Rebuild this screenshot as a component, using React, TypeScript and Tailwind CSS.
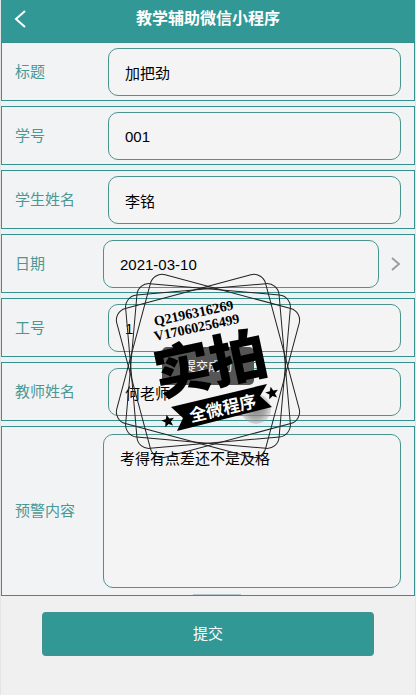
import { useState } from "react";
import type { ReactNode } from "react";

const fieldClass =
  "block min-w-0 flex-1 rounded-[10px] border border-[#4a948e] bg-[#f4f4f5] px-4 text-[15px] leading-6 text-black outline-none";

function Row({ id, label, wide, children }: { id: string; label: string; wide?: boolean; children: ReactNode }) {
  return (
    <div className="flex items-center border border-[#38908c] bg-[#f2f3f4] px-[13px] pt-[5px] pb-1">
      <label htmlFor={id} className={`${wide ? "w-[88px]" : "w-[93px]"} shrink-0 text-[15px] text-[#4a9894]`}>
        {label}
      </label>
      {children}
    </div>
  );
}

function TextRow({ id, label, initial }: { id: string; label: string; initial: string }) {
  const [value, setValue] = useState(initial);
  return (
    <Row id={id} label={label}>
      <input id={id} type="text" value={value} onChange={(e) => setValue(e.target.value)} className={`${fieldClass} h-12`} />
    </Row>
  );
}

const star = "0,-6.5 1.8,-2.2 6.5,-2 2.8,1 4,5.5 0,3 -4,5.5 -2.8,1 -6.5,-2 -1.8,-2.2";

function Stamp() {
  return (
    <svg
      viewBox="0 0 200 200"
      className="pointer-events-none absolute top-[266px] left-1/2 h-[200px] w-[200px] -translate-x-1/2"
      aria-hidden="true"
    >
      <defs>
        <radialGradient id="puck">
          <stop offset="0" stopColor="#777" stopOpacity="0.85" />
          <stop offset="0.6" stopColor="#888" stopOpacity="0.7" />
          <stop offset="1" stopColor="#aaa" stopOpacity="0.4" />
        </radialGradient>
      </defs>
      <circle cx="148" cy="143" r="15" fill="url(#puck)" />
      <g fill="none" stroke="#222" strokeWidth="1">
        <rect x="23" y="23" width="154" height="154" rx="12" transform="rotate(15 100 100)" />
        <rect x="23" y="23" width="154" height="154" rx="12" transform="rotate(5 100 100)" />
        <rect x="23" y="23" width="154" height="154" rx="12" transform="rotate(-5 100 100)" />
        <rect x="23" y="23" width="154" height="154" rx="12" transform="rotate(-15 100 100)" />
      </g>
      <g className="font-['Liberation_Serif',serif] text-[14px] font-bold">
        <text transform="translate(47 60) rotate(-12)">Q2196316269</text>
        <text transform="translate(47 75) rotate(-12)">V17060256499</text>
      </g>
      <text transform="translate(51 130) rotate(-12)" className="font-['Noto_Sans_CJK_SC',sans-serif] text-[57px] font-black">
        实拍
      </text>
      <polygon points="63,141 159,118 152,130 164,141 69,165 75,152" />
      <text
        transform="translate(83 156) rotate(-13)"
        fill="#fff"
        className="font-['Noto_Sans_CJK_SC',sans-serif] text-[17px] font-bold"
      >
        全微程序
      </text>
      <polygon points={star} transform="translate(60 155) rotate(-12)" />
      <polygon points={star} transform="translate(164 127) rotate(-12)" />
    </svg>
  );
}

export default function App() {
  const [note, setNote] = useState("考得有点差还不是及格");
  return (
    <div className="relative min-h-screen border-x border-[#e2e4e6] bg-[#f0f0f0] font-['Liberation_Sans','Noto_Sans_CJK_SC',sans-serif]">
      <header className="grid h-[42px] grid-cols-[40px_1fr_40px] items-center bg-[#319896] pb-1 text-white">
        <button type="button" aria-label="返回" className="flex h-full items-center pl-[13px]">
          <svg viewBox="0 0 12 18" className="h-[18px] w-3" fill="none" stroke="currentColor" strokeWidth="2">
            <path d="M11 1 L2 9 L11 17" />
          </svg>
        </button>
        <h1 className="text-center text-[16px] font-bold">教学辅助微信小程序</h1>
      </header>

      <form onSubmit={(e) => e.preventDefault()}>
        <div className="flex flex-col gap-[5px] bg-[#ebf2f6]">
          <TextRow id="title" label="标题" initial="加把劲" />
          <TextRow id="number" label="学号" initial="001" />
          <TextRow id="student" label="学生姓名" initial="李铭" />
          <Row id="date" label="日期" wide>
            <input id="date" type="text" readOnly value="2021-03-10" className={`${fieldClass} h-12`} />
            <svg viewBox="0 0 22 14" className="h-[14px] w-[22px] shrink-0" fill="none" stroke="#999" strokeWidth="1.8">
              <path d="M13 1 L20 7 L13 13" />
            </svg>
          </Row>
          <TextRow id="staff" label="工号" initial="1" />
          <TextRow id="teacher" label="教师姓名" initial="何老师" />
          <div className="relative flex items-center border border-[#38908c] bg-[#f2f3f4] px-[13px] py-[7px]">
            <label htmlFor="note" className="w-[88px] shrink-0 text-[15px] text-[#4a9894]">
              预警内容
            </label>
            <textarea
              id="note"
              value={note}
              onChange={(e) => setNote(e.target.value)}
              className={`${fieldClass} h-[154px] resize-none pt-3`}
            />
            <span className="absolute bottom-0 left-1/2 ml-[-15px] h-px w-12 bg-[#b5c4c4]" />
          </div>
        </div>
        <div className="px-[41px] pt-4">
          <button
            type="submit"
            className="h-11 w-full rounded-[4px] border-[3px] border-[#3b9491] bg-[#319896] text-[15px] text-white"
          >
            提交
          </button>
        </div>
      </form>

      <div
        role="status"
        className="absolute top-[347px] left-1/2 flex h-[38px] w-[92px] -translate-x-1/2 items-center justify-center rounded-[5px] bg-[#555555] pt-0.5 text-[12px] text-white"
      >
        提交成功
      </div>
      <Stamp />
    </div>
  );
}
